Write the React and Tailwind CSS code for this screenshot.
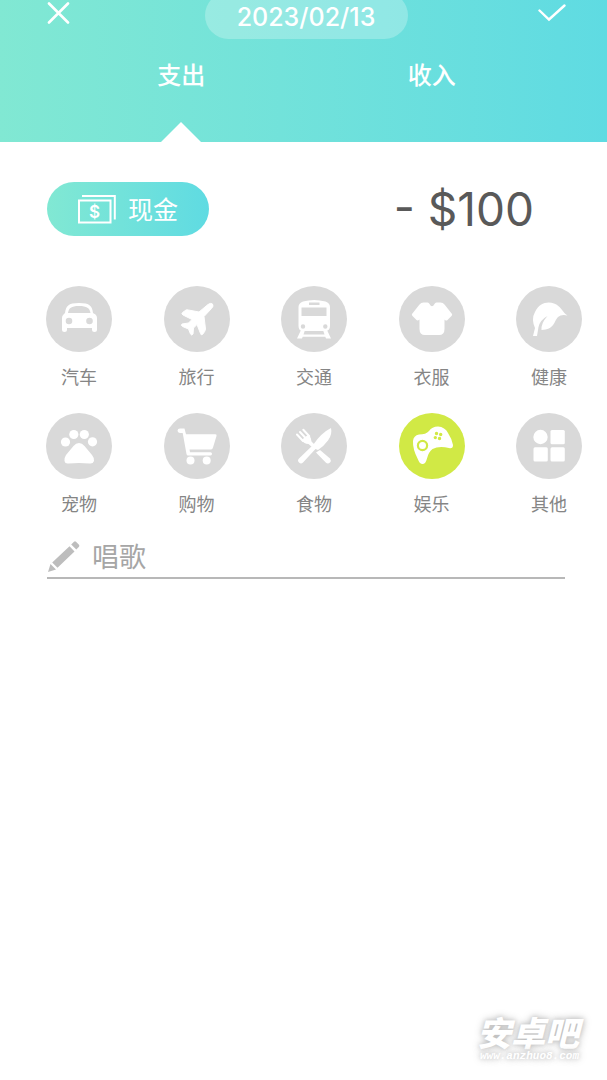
import { useState } from 'react'
import clsx from 'clsx'

const CATEGORIES = [
  {
    id: 'car',
    label: '汽车',
    icon: (
      <path
        fillRule="evenodd"
        d="M19 27 C20 20 22 17 33 17 C44 17 46 20 47 27 L49.500 28.500 Q51 29.500 51 32 V43.500 Q51 46 48.500 46 Q46 46 46 43.500 V42 H21 V43.500 Q21 46 18.500 46 Q16 46 16 43.500 V32 Q16 29.500 17.500 28.500 Z M22 27 H44.500 C43.500 22 41 20 33 20 C25 20 23 22 22 27 Z M23 31.700 A3.300 3.300 0 1 0 23 38.300 A3.300 3.300 0 1 0 23 31.700 Z M43.500 31.700 A3.300 3.300 0 1 0 43.500 38.300 A3.300 3.300 0 1 0 43.500 31.700 Z"
      />
    ),
  },
  {
    id: 'travel',
    label: '旅行',
    icon: (
      <path
        stroke="currentColor"
        strokeLinejoin="round"
        d="M35 26 L44 18.500 Q47 16.500 48.500 18 Q50 20 47.500 22.500 L40 30.500 L41.500 43 Q41.500 45 38.500 48.500 Q37 49.500 36.500 47.500 L33 38.500 L29.500 42 L29 48 Q27.500 50 26.500 48 L24.500 43 L18.500 40.500 Q16.500 39.500 18 38 L24.500 37 L28 33.500 L19 29 Q17 28 18.500 26.500 L22 24 Q23 23.500 24.500 24 Z"
      />
    ),
  },
  {
    id: 'transit',
    label: '交通',
    icon: (
      <>
        <path
          fillRule="evenodd"
          d="M17.500 21 Q17.500 17 22 15.500 Q33 12.500 44.500 15.500 Q49 17 49 21 V40 Q49 45 44 45 H22 Q17.500 45 17.500 40 Z M28 16.500 V19 H38.500 V16.500 Z M20.500 21.500 V30 H45.500 V21.500 Z M22 38.300 A2.200 2.200 0 1 0 22 42.700 A2.200 2.200 0 1 0 22 38.300 Z M44.300 38.300 A2.200 2.200 0 1 0 44.300 42.700 A2.200 2.200 0 1 0 44.300 38.300 Z"
        />
        <path d="M20 44 H24 L22.500 48.500 H43.500 L42 44 H46 L50 52.500 H45 L44.300 50.700 H21.700 L21 52.500 H16 Z" />
      </>
    ),
  },
  {
    id: 'clothes',
    label: '衣服',
    icon: (
      <path d="M13 28 L20.500 18.500 Q22 16.500 24.500 16.500 H28.500 Q30 16.500 30.500 18 Q33 22.500 35.500 18 Q36 16.500 37.500 16.500 H41.500 Q44 16.500 45.500 18.500 L53 28 Q53.500 29 52.500 30 L48.500 34 Q47.500 35 46 34 L45.500 33.500 V43 Q45.500 49 40 49 H26 Q20.500 49 20.500 43 V33.500 Q18.500 35 17.500 34 L13.500 30 Q12.500 29 13 28 Z" />
    ),
  },
  {
    id: 'health',
    label: '健康',
    icon: (
      <path d="M17 50 L19 42 Q15 33 19 26 C23 17.500 31 15 38 17.500 C45 20 46.500 26.500 51.500 29.500 Q45.500 28 42 31 C37.500 36 38.500 43.500 25.500 44 Q25 37 31.500 30 Q24 34 22.500 41 L21 50 Z" />
    ),
  },
  {
    id: 'pet',
    label: '宠物',
    icon: (
      <>
        <circle cx="19.500" cy="29" r="4.600" />
        <circle cx="27.800" cy="21.500" r="4.600" />
        <circle cx="38.300" cy="21.500" r="4.600" />
        <circle cx="46.500" cy="28.800" r="4.600" />
        <path d="M33 30 Q36 30 38.500 33 L46 42 Q48.500 45 48 48 Q47 51 43.500 50.500 Q33 49.500 22.500 50.500 Q19 51 18.500 48 Q18 45 20 42 L27.500 33 Q30 30 33 30 Z" />
      </>
    ),
  },
  {
    id: 'shopping',
    label: '购物',
    icon: (
      <>
        <path d="M16 15.500 H20.500 L22 21.300 H51.500 Q53 21.300 52.500 23 L49 34.500 Q48.500 36.500 47 36.500 H25.500 L26 39.300 H46.500 Q48 39.300 48 40.800 Q48 42.500 46.500 42.500 H24 Q22.800 42.500 22.500 41 L18.700 20 H16 Q13.500 19.500 13.500 17.700 Q13.500 15.500 16 15.500 Z" />
        <circle cx="26.500" cy="47.500" r="4" />
        <circle cx="42.700" cy="47.500" r="4" />
      </>
    ),
  },
  {
    id: 'food',
    label: '食物',
    icon: (
      <>
        <path
          fill="none"
          stroke="currentColor"
          strokeWidth="2"
          strokeLinecap="round"
          d="M16 21.500 L22 28 M19 19 L25 25.500 M22.300 16.800 L28.300 23.300"
        />
        <path d="M20.500 27 L27.500 21.500 Q30.500 25 30.500 28.500 L33.500 31.500 L31 34 L27.500 31 Q23 31 20.500 27 Z" />
        <path d="M50 15 Q51.500 21.500 47 27.500 Q42.500 33.500 37 37 L34.500 36 L22 49.500 Q20 51.500 18 49.500 Q16 47.500 18 45.500 L32 32 Q40 20 50 15 Z" />
        <path d="M35 39.500 L39 37 L49 45.500 Q50.500 47.500 49 49.500 Q47 51.500 45 49.800 Z" />
      </>
    ),
  },
  {
    id: 'fun',
    label: '娱乐',
    icon: (
      <path
        fillRule="evenodd"
        d="M14 28 Q14.500 22.500 20 21.500 Q27 21.500 30 18 Q33 13.500 39 13.500 Q46 14 49 20 Q53 26 54 32 Q54 36 50 35 Q40 32.500 33.500 36 Q29.500 39 28 45.500 Q26.500 51.500 23 51 Q20.500 50.500 19 46.500 Q13.500 36 14 28 Z M23.500 26.800 A5.700 5.700 0 1 0 23.500 38.200 A5.700 5.700 0 1 0 23.500 26.800 Z M23.500 29 A3.500 3.500 0 1 1 23.500 36 A3.500 3.500 0 1 1 23.500 29 Z M37.500 18.800 A1.700 1.700 0 1 0 37.500 22.200 A1.700 1.700 0 1 0 37.500 18.800 Z M41.700 19.800 A1.700 1.700 0 1 0 41.700 23.200 A1.700 1.700 0 1 0 41.700 19.800 Z M36.300 22.900 A1.700 1.700 0 1 0 36.300 26.300 A1.700 1.700 0 1 0 36.300 22.900 Z M40.500 23.800 A1.700 1.700 0 1 0 40.500 27.200 A1.700 1.700 0 1 0 40.500 23.800 Z"
      />
    ),
  },
  {
    id: 'other',
    label: '其他',
    icon: (
      <>
        <circle cx="24.500" cy="24" r="7.200" />
        <rect x="34.500" y="17" width="14.300" height="14.300" rx="1.500" />
        <rect x="17.500" y="34.300" width="14.300" height="14.300" rx="1.500" />
        <rect x="34.500" y="34.300" width="14.300" height="14.300" rx="1.500" />
      </>
    ),
  },
]

const TABS = [
  { id: 'expense', label: '支出' },
  { id: 'income', label: '收入' },
]

function Header({ tab, onTab }) {
  return (
    <header className="bg-linear-to-r from-[#81e8d3] to-[#5fdbe2] text-white">
      <div className="flex items-start justify-between pl-[47px] pr-[41px]">
        <button type="button" aria-label="关闭" className="pt-0.5">
          <svg width="27" height="23" viewBox="0 0 27 23" fill="none" stroke="currentColor" strokeWidth="2.600" strokeLinecap="round">
            <path d="M2 1.500 L21 20.500 M21 1.500 L2 20.500" />
          </svg>
        </button>
        <button
          type="button"
          className="-mt-2 h-[47px] w-[203px] rounded-full bg-white/25 font-['Inter',sans-serif] text-[25px] leading-[50px] font-medium">
          2023/02/13
        </button>
        <button type="button" aria-label="保存" className="pt-1">
          <svg width="28" height="18" viewBox="0 0 28 18" fill="none" stroke="currentColor" strokeWidth="2.400" strokeLinecap="round">
            <path d="M1.500 6.500 L11 15.500 L26.500 1.500" />
          </svg>
        </button>
      </div>

      <div role="tablist" className="grid grid-cols-2 pl-14 pr-[50px] pt-[19px]">
        {TABS.map((t) => (
          <button
            key={t.id}
            type="button"
            role="tab"
            aria-selected={tab === t.id}
            onClick={() => onTab(t.id)}
            className="flex h-[84px] flex-col items-center justify-between text-2xl font-medium">
            {t.label}
            {tab === t.id && (
              <svg width="40" height="20" viewBox="0 0 40 20" fill="currentColor">
                <path d="M20 0 L40 20 H0 Z" />
              </svg>
            )}
          </button>
        ))}
      </div>
    </header>
  )
}

function CashIcon() {
  return (
    <svg width="38" height="30" viewBox="0 0 38 30" fill="none" stroke="currentColor" strokeWidth="2">
      <rect x="1" y="6.500" width="31.500" height="22" />
      <path d="M4 2 H36.800 V25.500" />
      <text
        x="16.500"
        y="23.500"
        textAnchor="middle"
        fill="currentColor"
        stroke="none"
        className="font-['Inter',sans-serif] text-[17px] font-semibold">
        $
      </text>
    </svg>
  )
}

function CategoryButton({ category, active, onSelect }) {
  return (
    <button
      type="button"
      aria-pressed={active}
      onClick={() => onSelect(category.id)}
      className="flex flex-col items-center gap-3 text-white">
      <span className={clsx('size-[66px] rounded-full', active ? 'bg-[#d1e945]' : 'bg-[#d9d9d9]')}>
        <svg viewBox="0 0 66 66" fill="currentColor" className="size-full">
          {category.icon}
        </svg>
      </span>
      <span className="text-lg leading-6 text-[#858585]">{category.label}</span>
    </button>
  )
}

function Watermark() {
  return (
    <div className="absolute right-7 bottom-[18px] text-right text-white italic [text-shadow:0_0_8px_#bbb,0_0_4px_#ccc]">
      <div className="text-[34px] leading-[36px] font-black">安卓吧</div>
      <div className="font-['Liberation_Mono',monospace] text-[11px] leading-3 font-bold">www.anzhuo8.com</div>
    </div>
  )
}

export default function App() {
  const [tab, setTab] = useState('expense')
  const [selected, setSelected] = useState('fun')
  const [note, setNote] = useState('唱歌')

  return (
    <div className="relative min-h-screen bg-white font-['Noto_Sans_CJK_SC',sans-serif]">
      <Header tab={tab} onTab={setTab} />

      <main className="pt-10">
        <div className="flex items-center justify-between pl-[47px] pr-[73px]">
          <button
            type="button"
            className="flex h-[54px] items-center gap-3 rounded-full bg-linear-to-r from-[#81e8d3] to-[#5fdbe2] px-[31px] text-[25px] text-white">
            <CashIcon />
            现金
          </button>
          <span className="font-['Inter',sans-serif] text-[46px] leading-[54px] text-[#595959]">- $100</span>
        </div>

        <div className="mt-[50px] grid grid-cols-[repeat(5,66px)] justify-between gap-y-[25px] pl-[46px] pr-[25px]">
          {CATEGORIES.map((c) => (
            <CategoryButton key={c.id} category={c} active={c.id === selected} onSelect={setSelected} />
          ))}
        </div>

        <label className="mt-5 mr-[42px] ml-[47px] flex h-11 items-center gap-3 border-b-2 border-[#b8b8b8]">
          <svg width="33" height="33" viewBox="0 0 33 33" fill="#bdbdbd">
            <path d="M1 32 L3.500 24 L9 29.500 Z M5.200 22.500 L22.500 6.200 L27.500 11.500 L10.500 27.800 Z M24.200 4.500 L27 1.700 Q28 1 29 1.700 L32 4.800 Q32.700 5.700 32 6.700 L29.300 9.500 Z" />
          </svg>
          <input
            type="text"
            aria-label="备注"
            value={note}
            onChange={(e) => setNote(e.target.value)}
            className="min-w-0 flex-1 text-[27px] leading-10 text-[#a6a6a6] outline-none"
          />
        </label>
      </main>

      <Watermark />
    </div>
  )
}
